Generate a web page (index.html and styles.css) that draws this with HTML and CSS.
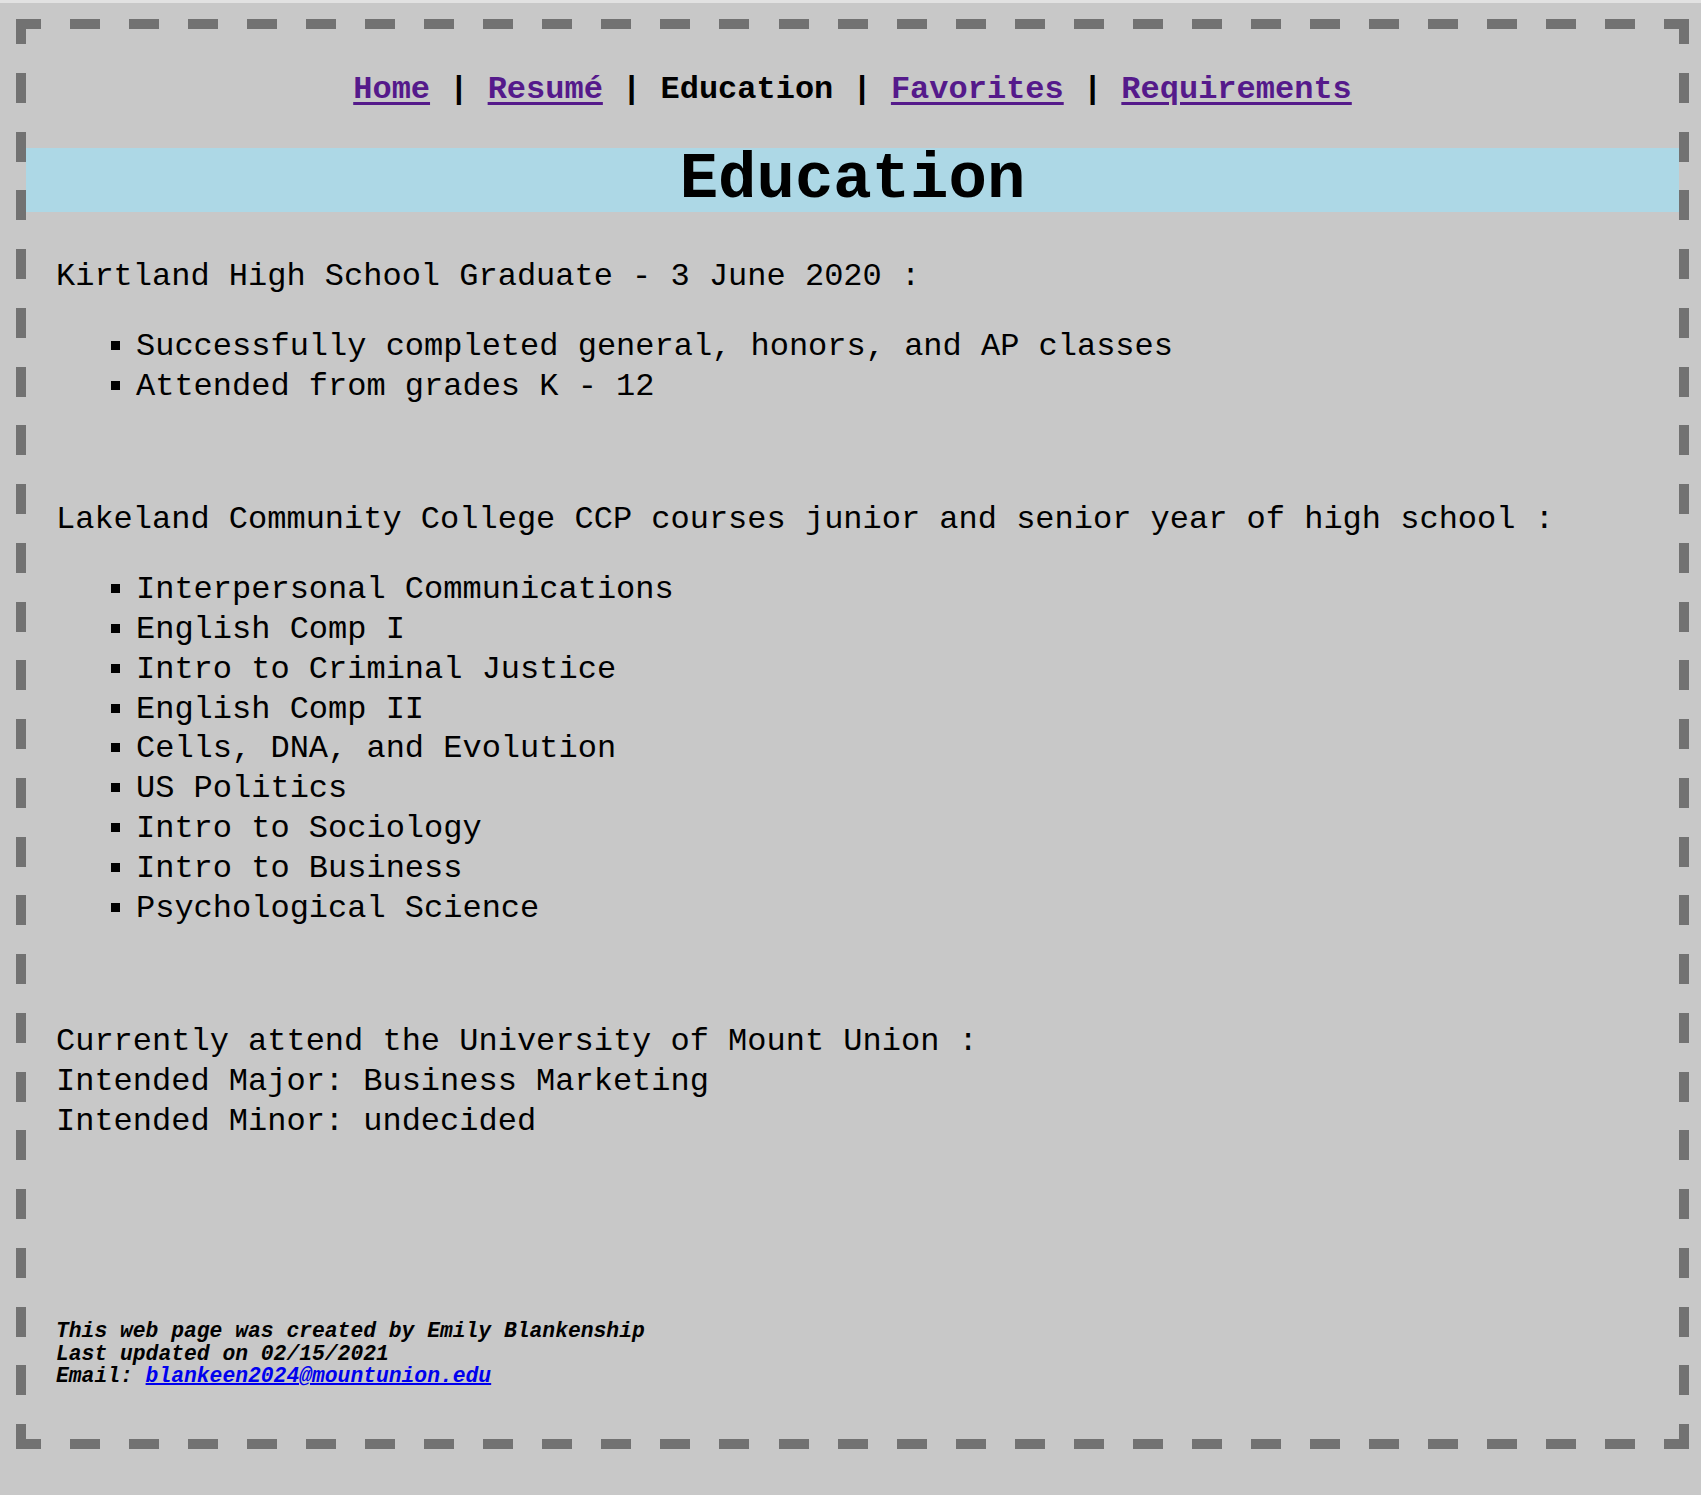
FILE: index.html
```html
<!DOCTYPE html>
<html lang="en">
<head>
<meta charset="utf-8">
<title>Education</title>
<link rel="stylesheet" href="styles.css">
</head>
<body>
<div class="page">
  <nav class="nav">
    <a class="nav-link" href="#">Home</a> | <a class="nav-link" href="#">Resumé</a> | <span class="nav-current">Education</span> | <a class="nav-link" href="#">Favorites</a> | <a class="nav-link" href="#">Requirements</a>
  </nav>

  <h1 class="title">Education</h1>

  <section class="section">
    <p class="lead">Kirtland High School Graduate - 3 June 2020 :</p>
    <ul class="list">
      <li>Successfully completed general, honors, and AP classes</li>
      <li>Attended from grades K - 12</li>
    </ul>
  </section>

  <section class="section">
    <p class="lead">Lakeland Community College CCP courses junior and senior year of high school :</p>
    <ul class="list">
      <li>Interpersonal Communications</li>
      <li>English Comp I</li>
      <li>Intro to Criminal Justice</li>
      <li>English Comp II</li>
      <li>Cells, DNA, and Evolution</li>
      <li>US Politics</li>
      <li>Intro to Sociology</li>
      <li>Intro to Business</li>
      <li>Psychological Science</li>
    </ul>
  </section>

  <section class="section">
    <p class="lead">Currently attend the University of Mount Union :<br>Intended Major: Business Marketing<br>Intended Minor: undecided</p>
  </section>

  <footer class="footer">
    This web page was created by Emily Blankenship<br>
    Last updated on 02/15/2021<br>
    Email: <a class="mail" href="#">blankeen2024@mountunion.edu</a>
  </footer>
</div>
</body>
</html>
```

FILE: styles.css
```css
html {
  background: #c8c8c8;
}

body {
  margin: 0;
  padding: 16px 12px 46px 16px;
  border-top: 3px solid #e2e2e2;
  background: #c8c8c8;
  color: #000;
  font-family: "Courier New", "Liberation Mono", monospace;
  font-size: 32px;
  line-height: 39.8px;
}

.page {
  border: 10px solid transparent;
  padding: 41px 0 51px;
  background-image:
    repeating-linear-gradient(90deg, #727272 0 25px, transparent 25px 54.04px, #727272 54.04px 59.04px),
    repeating-linear-gradient(90deg, #727272 0 25px, transparent 25px 54.04px, #727272 54.04px 59.04px),
    repeating-linear-gradient(180deg, #727272 0 25px, transparent 25px 53.75px, #727272 53.75px 58.75px),
    repeating-linear-gradient(180deg, #727272 0 25px, transparent 25px 53.75px, #727272 53.75px 58.75px);
  background-size: 100% 10px, 100% 10px, 10px 100%, 10px 100%;
  background-position: left top, left bottom, left top, right top;
  background-repeat: no-repeat;
  background-origin: border-box;
  background-clip: border-box;
}

.nav {
  text-align: center;
  font-weight: bold;
  line-height: 39.8px;
}

.nav-link {
  color: #551a8b;
  text-decoration: underline;
  text-decoration-thickness: 3px;
  text-underline-offset: 4px;
}

.nav-current {
  color: #000;
}

.title {
  margin: 38px 0 0;
  background: #add8e6;
  text-align: center;
  font-size: 64px;
  line-height: 64.5px;
  font-weight: bold;
}

.section {
  padding: 0 30px;
}

.title + .section {
  margin-top: 44.5px;
}

.section + .section {
  margin-top: 93.8px;
}

.lead {
  margin: 0;
}

.list {
  margin: 30.2px 0 0;
  padding-left: 80px;
  list-style: square;
}

.footer {
  margin-top: 178.6px;
  padding: 0 30px;
  font-size: 21.33px;
  line-height: 22.5px;
  font-weight: bold;
  font-style: italic;
}

.mail {
  color: #0000ee;
  text-decoration: underline;
  text-decoration-thickness: 2px;
}
```
